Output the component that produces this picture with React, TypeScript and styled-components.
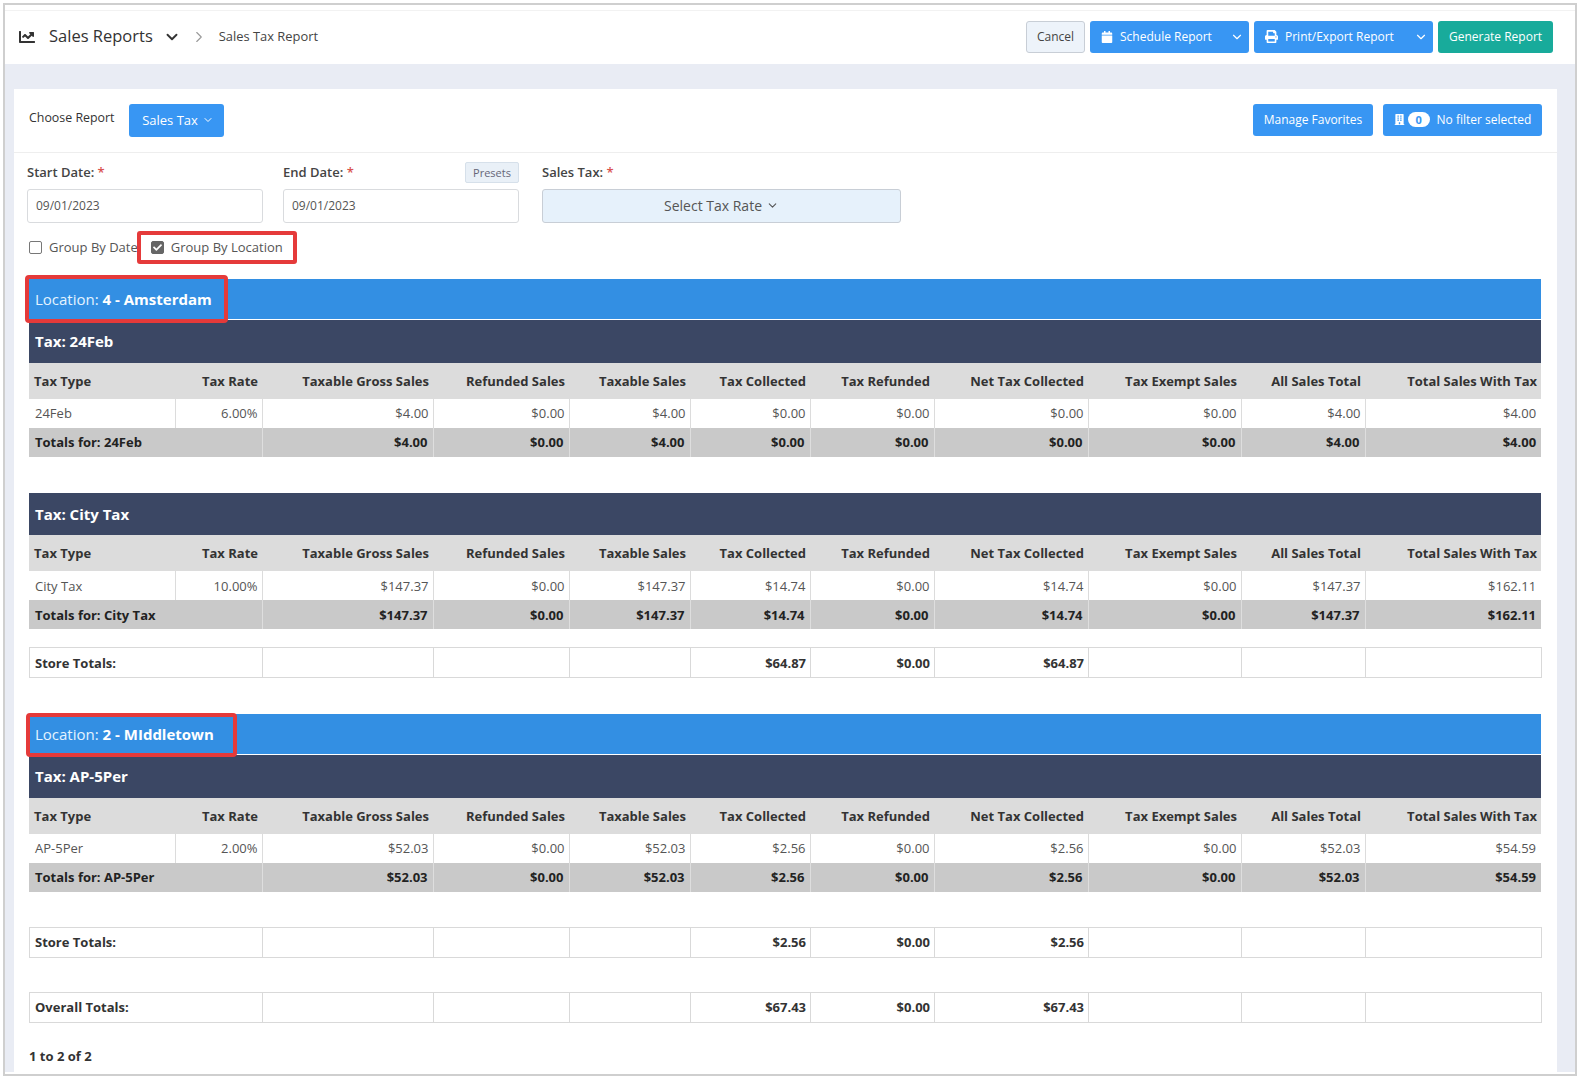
import React from "react";
import styled, { createGlobalStyle } from "styled-components";
import { FaBuilding, FaCalendar, FaChartLine, FaPrint, FaCheck } from "react-icons/fa";
import { ChevronDown, ChevronRight } from "lucide-react";

const Global = createGlobalStyle`
  html, body { margin: 0; padding: 0; background: #fff; }
  body { font-family: "Open Sans", "Liberation Sans", sans-serif; color: #333; }
  * { box-sizing: border-box; }
`;

const Page = styled.div`
  width: 1579px;
  height: 1078px;
  padding: 3px 2px 2px 3px;
`;
const Frame = styled.div`
  height: 100%;
  border: 2px solid #cfcfcf;
  background: #fff;
  display: flex;
  flex-direction: column;
  overflow: hidden;
`;
const Header = styled.header`
  height: 54px;
  flex: none;
  background: #fff;
  border-top: 1px solid #f2f2f2;
  margin-top: 5px;
  display: flex;
  align-items: center;
  padding: 0 22px 2px 14px;
`;
const Title = styled.h1`
  margin: 0 0 2px 14px;
  font-size: 16.5px;
  font-weight: 400;
  color: #333;
`;
const TitleCaret = styled(ChevronDown)`
  margin-left: 10px;
  color: #333;
`;
const CrumbArrow = styled(ChevronRight)`
  margin-left: 9px;
  color: #999;
`;
const Crumb = styled.span`
  font-size: 12.9px;
  color: #444;
  margin: 0 0 2px 11px;
`;
const Spacer = styled.div`
  flex: 1;
`;
const HeaderButtons = styled.div`
  display: flex;
  gap: 5px;
`;
const Btn = styled.button<{ $w: number; $tone?: "blue" | "green" | "light" }>`
  height: 32px;
  width: ${(p) => p.$w}px;
  border: ${(p) => (p.$tone === "light" ? "1px solid #c8ced6" : "none")};
  border-radius: 3px;
  background: ${(p) =>
    p.$tone === "green" ? "#18ab9b" : p.$tone === "light" ? "#edf3fa" : "#3896f3"};
  color: ${(p) => (p.$tone === "light" ? "#444" : "#fff")};
  font: 400 12px "Open Sans", sans-serif;
  padding: 0;
  display: flex;
  align-items: center;
  justify-content: center;
  white-space: nowrap;
`;
const SplitLabel = styled.span`
  flex: 1;
  display: flex;
  align-items: center;
  gap: 7px;
  padding-left: 11px;
`;
const SplitCaret = styled.span`
  width: 24px;
  display: flex;
  align-items: center;
  justify-content: center;
`;
const Body = styled.main`
  flex: 1;
  min-height: 0;
  margin-bottom: 2px;
  background: #e9ecf4;
  padding: 25px 18px 0 9px;
  display: flex;
`;
const Panel = styled.section`
  flex: 1;
  background: #fff;
  overflow: hidden;
`;
const TopRow = styled.div`
  height: 64px;
  padding: 15px 15px 0 15px;
  border-bottom: 1px solid #eeeeee;
  display: flex;
  align-items: flex-start;
`;
const ChooseLabel = styled.span`
  font-size: 12.4px;
  color: #333;
  margin-top: 5px;
`;
const ChooseBtn = styled(Btn)`
  height: 33px;
  font-size: 13px;
  margin-left: 14px;
  padding: 0 0 2px 4px;
  gap: 4px;
`;
const TopActions = styled.div`
  margin-left: auto;
  display: flex;
  gap: 10px;
`;
const ActionBtn = styled(Btn)`
  padding-bottom: 2px;
`;
const Badge = styled.span`
  width: 22px;
  height: 15px;
  border-radius: 8px;
  background: #fff;
  color: #3896f3;
  font-size: 11px;
  font-weight: 700;
  line-height: 15px;
  text-align: center;
  margin: 0 7px 0 3px;
`;
const FormRow = styled.div`
  display: flex;
  padding: 9px 0 0 13px;
`;
const Field = styled.div<{ $w: number; $mr?: number }>`
  width: ${(p) => p.$w}px;
  margin-right: ${(p) => p.$mr ?? 0}px;
`;
const LabelRow = styled.div`
  height: 27px;
  display: flex;
  align-items: flex-start;
  justify-content: space-between;
`;
const FieldLabel = styled.label`
  font-size: 13px;
  font-weight: 600;
  color: #444;
  margin-top: 1px;
`;
const Req = styled.span`
  color: #d9534f;
`;
const Presets = styled.span`
  height: 21px;
  width: 54px;
  background: #e9f0f7;
  border: 1px solid #d6e0ea;
  border-radius: 2px;
  font-size: 11px;
  color: #667;
  display: flex;
  align-items: center;
  justify-content: center;
`;
const DateInput = styled.div`
  height: 34px;
  border: 1px solid #d9dbde;
  border-radius: 3px;
  padding: 0 0 2px 8px;
  display: flex;
  align-items: center;
  font-size: 12px;
  color: #555;
`;
const SelectBox = styled.div`
  height: 34px;
  border: 1px solid #c8ced6;
  border-radius: 3px;
  background: #e6f1fb;
  padding-bottom: 2px;
  display: flex;
  align-items: center;
  justify-content: center;
  gap: 4px;
  font-size: 14px;
  color: #555;
`;
const CheckRow = styled.div`
  display: flex;
  align-items: center;
  height: 32px;
  margin-top: 8px;
  padding-left: 15px;
`;
const CheckLabel = styled.label`
  display: flex;
  align-items: center;
  font-size: 13px;
  color: #555;
  white-space: nowrap;
`;
const HighlightLabel = styled(CheckLabel)`
  height: 33px;
  width: 160px;
  border: 4px solid #e53a3a;
  border-radius: 3px;
  padding-left: 10px;
  margin-left: -1px;
`;
const Box = styled.span<{ $checked?: boolean }>`
  width: 13px;
  height: 13px;
  border-radius: 2px;
  border: 1px solid ${(p) => (p.$checked ? "#666" : "#777")};
  background: ${(p) => (p.$checked ? "#666" : "#fff")};
  color: #fff;
  margin-right: 7px;
  display: flex;
  align-items: center;
  justify-content: center;
  font-size: 9px;
`;
const Reports = styled.div`
  padding: 16px 15px 0 15px;
`;
const LocationBar = styled.div<{ $mt?: number }>`
  position: relative;
  width: 1512px;
  height: 40px;
  margin-top: ${(p) => p.$mt ?? 0}px;
  background: #338fe3;
  color: #e4f3ff;
  font-size: 15px;
  display: flex;
  align-items: center;
  padding-left: 6px;
  strong { color: #fff; font-weight: 700; }
`;
const LocationHighlight = styled.span<{ $w: number; $left: number; $top: number; $h: number }>`
  position: absolute;
  left: ${(p) => p.$left}px;
  top: ${(p) => p.$top}px;
  width: ${(p) => p.$w}px;
  height: ${(p) => p.$h}px;
  border: 4px solid #e53a3a;
  border-radius: 4px;
`;
const Table = styled.table<{ $mt?: number }>`
  width: 1512px;
  table-layout: fixed;
  border-collapse: collapse;
  margin-top: ${(p) => p.$mt ?? 0}px;
  font-size: 13px;
`;
const Col = styled.col<{ $w: number }>`
  width: ${(p) => p.$w}px;
`;
const TaxHead = styled.th`
  height: 43px;
  background: #3b4764;
  color: #fff;
  text-align: left;
  padding: 0 0 0 6px;
  font-size: 15px;
  font-weight: 700;
  border-top: 1px solid #fff;
`;
const HeadCell = styled.th<{ $left?: boolean }>`
  height: 36px;
  background: #dcdcdc;
  color: #333;
  font-weight: 700;
  padding: 0 4px 0 5px;
  text-align: ${(p) => (p.$left ? "left" : "right")};
  white-space: nowrap;
`;
const DataCell = styled.td<{ $left?: boolean }>`
  height: 29px;
  padding: 0 4px 0 6px;
  color: #555;
  text-align: ${(p) => (p.$left ? "left" : "right")};
  border-right: 1px solid #dcdcdc;
  &:last-child { border-right: 0; padding-right: 5px; }
`;
const TotalCell = styled.td<{ $left?: boolean }>`
  height: 29px;
  padding: 0 5px 0 6px;
  background: #c9c9c9;
  color: #222;
  font-weight: 700;
  text-align: ${(p) => (p.$left ? "left" : "right")};
  border-right: 1px solid #dedede;
  &:last-child { border-right: 0; }
`;
const SumCell = styled.td<{ $left?: boolean }>`
  height: 30px;
  padding: 0 4px 0 5px;
  border: 1px solid #d9d9d9;
  font-weight: 700;
  color: #333;
  text-align: ${(p) => (p.$left ? "left" : "right")};
`;
const Pager = styled.div`
  margin-top: 24px;
  font-size: 13px;
  font-weight: 700;
  color: #333;
`;

const COLS = [146, 87, 171, 136, 121, 120, 124, 154, 153, 124, 176];
const HEADS = [
  "Tax Rate",
  "Taxable Gross Sales",
  "Refunded Sales",
  "Taxable Sales",
  "Tax Collected",
  "Tax Refunded",
  "Net Tax Collected",
  "Tax Exempt Sales",
  "All Sales Total",
  "Total Sales With Tax",
];

const Cols = () => (
  <colgroup>
    {COLS.map((w, i) => (
      <Col key={i} $w={w} />
    ))}
  </colgroup>
);

type TaxProps = { name: string; rate: string; values: string[]; mt?: number };

const TaxTable = ({ name, rate, values, mt }: TaxProps) => (
  <Table $mt={mt}>
    <Cols />
    <thead>
      <tr>
        <TaxHead colSpan={11}>Tax: {name}</TaxHead>
      </tr>
      <tr>
        <HeadCell $left>Tax Type</HeadCell>
        {HEADS.map((h) => (
          <HeadCell key={h}>{h}</HeadCell>
        ))}
      </tr>
    </thead>
    <tbody>
      <tr>
        <DataCell $left>{name}</DataCell>
        <DataCell>{rate}</DataCell>
        {values.map((v, i) => (
          <DataCell key={i}>{v}</DataCell>
        ))}
      </tr>
      <tr>
        <TotalCell $left colSpan={2}>
          Totals for: {name}
        </TotalCell>
        {values.map((v, i) => (
          <TotalCell key={i}>{v}</TotalCell>
        ))}
      </tr>
    </tbody>
  </Table>
);

const SumTable = ({ label, values, mt }: { label: string; values: string[]; mt: number }) => (
  <Table $mt={mt}>
    <Cols />
    <tbody>
      <tr>
        <SumCell $left colSpan={2}>
          {label}
        </SumCell>
        <SumCell />
        <SumCell />
        <SumCell />
        <SumCell>{values[0]}</SumCell>
        <SumCell>{values[1]}</SumCell>
        <SumCell>{values[2]}</SumCell>
        <SumCell />
        <SumCell />
        <SumCell />
      </tr>
    </tbody>
  </Table>
);

export default function App() {
  return (
    <Page>
      <Global />
      <Frame>
        <Header>
          <FaChartLine size={16} color="#333" />
          <Title>Sales Reports</Title>
          <TitleCaret size={18} strokeWidth={2.5} />
          <CrumbArrow size={18} strokeWidth={1.5} />
          <Crumb>Sales Tax Report</Crumb>
          <Spacer />
          <HeaderButtons>
            <Btn $w={59} $tone="light">Cancel</Btn>
            <Btn $w={159}>
              <SplitLabel>
                <FaCalendar size={12} />
                Schedule Report
              </SplitLabel>
              <SplitCaret>
                <ChevronDown size={14} />
              </SplitCaret>
            </Btn>
            <Btn $w={179}>
              <SplitLabel>
                <FaPrint size={13} />
                Print/Export Report
              </SplitLabel>
              <SplitCaret>
                <ChevronDown size={14} />
              </SplitCaret>
            </Btn>
            <Btn $w={115} $tone="green">Generate Report</Btn>
          </HeaderButtons>
        </Header>
        <Body>
          <Panel>
            <TopRow>
              <ChooseLabel>Choose Report</ChooseLabel>
              <ChooseBtn $w={95}>
                Sales Tax <ChevronDown size={12} />
              </ChooseBtn>
              <TopActions>
                <ActionBtn $w={120}>Manage Favorites</ActionBtn>
                <ActionBtn $w={159}>
                  <FaBuilding size={11} />
                  <Badge>0</Badge>
                  No filter selected
                </ActionBtn>
              </TopActions>
            </TopRow>
            <FormRow>
              <Field $w={236} $mr={20}>
                <LabelRow>
                  <FieldLabel>
                    Start Date: <Req>*</Req>
                  </FieldLabel>
                </LabelRow>
                <DateInput>09/01/2023</DateInput>
              </Field>
              <Field $w={236} $mr={23}>
                <LabelRow>
                  <FieldLabel>
                    End Date: <Req>*</Req>
                  </FieldLabel>
                  <Presets>Presets</Presets>
                </LabelRow>
                <DateInput>09/01/2023</DateInput>
              </Field>
              <Field $w={359}>
                <LabelRow>
                  <FieldLabel>
                    Sales Tax: <Req>*</Req>
                  </FieldLabel>
                </LabelRow>
                <SelectBox>
                  Select Tax Rate <ChevronDown size={13} />
                </SelectBox>
              </Field>
            </FormRow>
            <CheckRow>
              <CheckLabel>
                <Box />
                Group By Date
              </CheckLabel>
              <HighlightLabel>
                <Box $checked>
                  <FaCheck />
                </Box>
                Group By Location
              </HighlightLabel>
            </CheckRow>
            <Reports>
              <LocationBar>
                <span>
                  Location: <strong>4 - Amsterdam</strong>
                </span>
                <LocationHighlight $left={-4} $top={-4} $w={203} $h={48} />
              </LocationBar>
              <TaxTable
                name="24Feb"
                rate="6.00%"
                values={["$4.00", "$0.00", "$4.00", "$0.00", "$0.00", "$0.00", "$0.00", "$4.00", "$4.00"]}
              />
              <TaxTable
                mt={35}
                name="City Tax"
                rate="10.00%"
                values={["$147.37", "$0.00", "$147.37", "$14.74", "$0.00", "$14.74", "$0.00", "$147.37", "$162.11"]}
              />
              <SumTable mt={18} label="Store Totals:" values={["$64.87", "$0.00", "$64.87"]} />
              <LocationBar $mt={36}>
                <span>
                  Location: <strong>2 - MIddletown</strong>
                </span>
                <LocationHighlight $left={-3} $top={-1} $w={211} $h={44} />
              </LocationBar>
              <TaxTable
                name="AP-5Per"
                rate="2.00%"
                values={["$52.03", "$0.00", "$52.03", "$2.56", "$0.00", "$2.56", "$0.00", "$52.03", "$54.59"]}
              />
              <SumTable mt={35} label="Store Totals:" values={["$2.56", "$0.00", "$2.56"]} />
              <SumTable mt={34} label="Overall Totals:" values={["$67.43", "$0.00", "$67.43"]} />
              <Pager>1 to 2 of 2</Pager>
            </Reports>
          </Panel>
        </Body>
      </Frame>
    </Page>
  );
}
